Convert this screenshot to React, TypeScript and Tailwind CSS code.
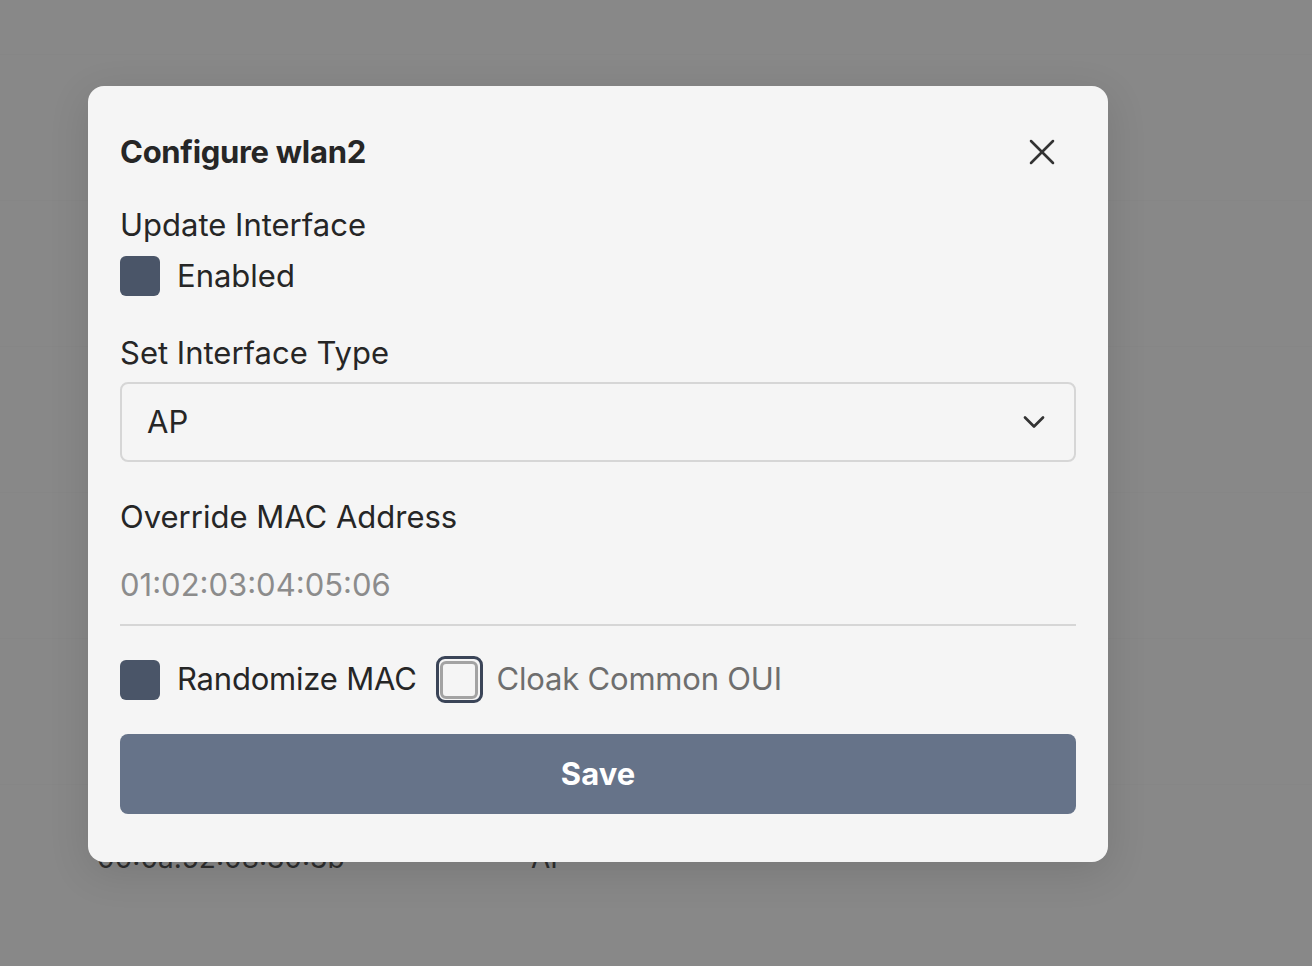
import { X, ChevronDown } from 'lucide-react';

const rows = [
  { mac: '', type: '' },
  { mac: '', type: '' },
  { mac: '', type: '' },
  { mac: '', type: '' },
  { mac: '', type: '' },
  { mac: '00:0a:52:08:30:3b', type: 'AP' },
];

export default function App() {
  return (
    <div className="relative h-[966px] w-[1312px] overflow-hidden bg-[#888888] font-['Inter',sans-serif] text-[31px] text-[#262626]">
      {/* page behind the overlay */}
      <div className="flex flex-col pt-[54px]">
        {rows.map((r, i) => (
          <div key={i} className="flex h-[146px] items-start border-t border-[#868686] pl-[97px] pt-[52px] text-[28px]">
            <span className="w-[434px] text-[#2e2e2e]">{r.mac}</span>
            <span className="text-[#2e2e2e]">{r.type}</span>
          </div>
        ))}
      </div>

      {/* dialog */}
      <div className="absolute left-[88px] top-[86px] flex w-[1020px] flex-col rounded-[16px] bg-[#f5f5f5] px-[32px] pb-[48px] pt-[32px] shadow-[0_10px_40px_rgba(0,0,0,0.12)]">
        <div className="flex h-[68px] items-center justify-between">
          <h2 className="text-[31px] font-bold tracking-[-0.3px] text-[#262626]">Configure wlan2</h2>
          <button className="mr-[12px] text-[#333]">
            <X size={44} strokeWidth={1.4} />
          </button>
        </div>

        <div className="mt-[19px] leading-[40px]">Update Interface</div>
        <label className="mt-[11px] flex items-center gap-[17px]">
          <span className="h-[40px] w-[40px] rounded-[6px] bg-[#4a5568]" />
          <span className="leading-[40px]">Enabled</span>
        </label>

        <div className="mt-[37px] leading-[40px]">Set Interface Type</div>
        <div className="mt-[9px] flex h-[80px] items-center justify-between rounded-[8px] border-2 border-[#d6d6d6] pl-[25px] pr-[22px]">
          <span>AP</span>
          <ChevronDown size={36} strokeWidth={1.8} className="text-[#333]" />
        </div>

        <div className="mt-[35px] leading-[40px]">Override MAC Address</div>
        <div className="mt-[28px] flex h-[61px] items-start border-b-2 border-[#d6d6d6]">
          <span className="leading-[40px] text-[#8c8c8c]">01:02:03:04:05:06</span>
        </div>

        <div className="mt-[30px] flex items-center">
          <span className="h-[40px] w-[40px] rounded-[6px] bg-[#4a5568]" />
          <span className="ml-[17px] tracking-[-0.2px]">Randomize MAC</span>
          <span className="ml-[19px] flex h-[47px] w-[47px] items-center justify-center rounded-[9px] border-[3px] border-[#3b4558]">
            <span className="h-[38px] w-[38px] rounded-[6px] border-[3px] border-[#a3a3a3] bg-[#f5f5f5]" />
          </span>
          <span className="ml-[14px] tracking-[-0.2px] text-[#6e6e6e]">Cloak Common OUI</span>
        </div>

        <button className="mt-[31px] flex h-[80px] items-center justify-center rounded-[8px] bg-[#667389] text-[31px] font-bold text-white">
          Save
        </button>
      </div>
    </div>
  );
}
